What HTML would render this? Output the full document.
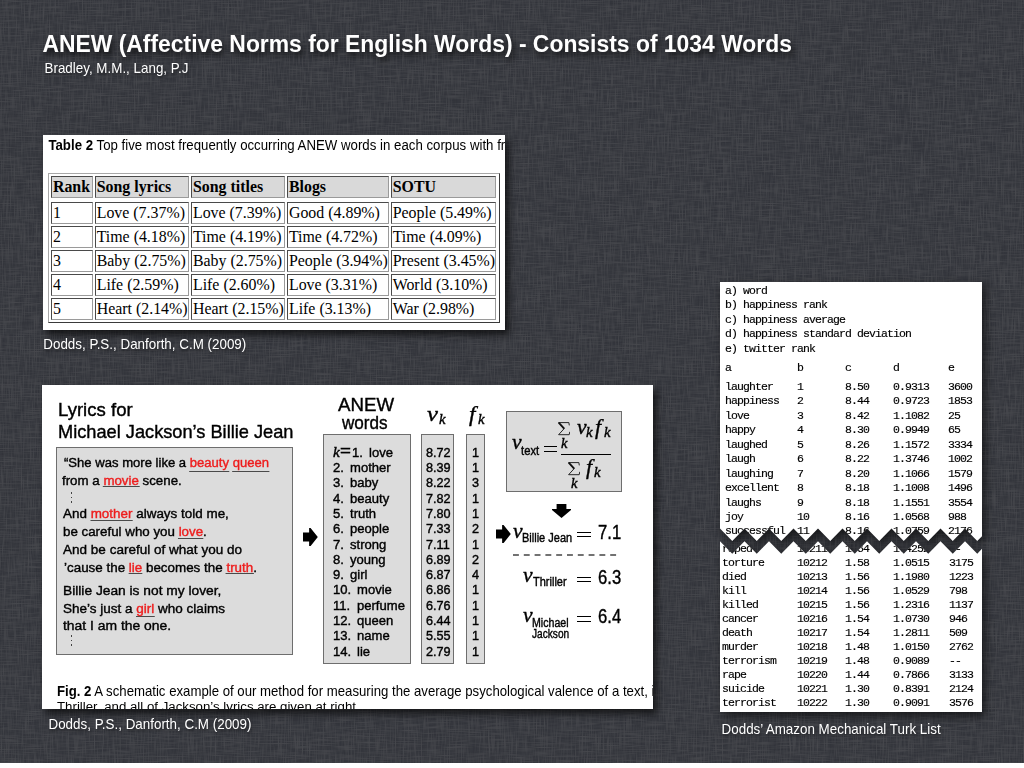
<!DOCTYPE html>
<html>
<head>
<meta charset="utf-8">
<title>ANEW (Affective Norms for English Words)</title>
<style>
html,body{margin:0;padding:0;background:#fff;}
body{width:1024px;height:768px;overflow:hidden;position:relative;font-family:"Liberation Sans",sans-serif;}
#slide{position:absolute;left:0;top:0;width:1024px;height:763px;background:#3b3d42;overflow:hidden;}
.t{position:absolute;white-space:pre;margin:0;padding:0;color:#000;}
.b{position:absolute;box-sizing:border-box;margin:0;padding:0;}
.w{color:#fff;text-shadow:1px 2px 3px rgba(0,0,0,.5);}
.sh{box-shadow:4px 5px 7px rgba(0,0,0,.62);}
.r{color:#ee1c1c;background:linear-gradient(#4a4a4a,#4a4a4a) 0 13.3px/100% 1px no-repeat;padding:0 0.5px;margin:0 -0.5px;}
.rd{color:#ee1c1c;border-bottom:1px solid #4a4a4a;padding:0 0.5px 0.7px;margin:0 -0.5px;}
.f .t{-webkit-text-stroke:0.4px currentColor;}
.f .ns{-webkit-text-stroke:0;}
</style>
</head>
<body>
<div id="slide">
<svg class="b" style="left:0;top:0" width="1024" height="763" viewBox="0 0 1024 763">
<defs>
<filter id="lin" x="0" y="0" width="100%" height="100%" color-interpolation-filters="sRGB">
<feTurbulence type="fractalNoise" baseFrequency="0.045 0.85" numOctaves="2" seed="3" result="h"/>
<feColorMatrix in="h" type="matrix" values="0 0 0 0 .82  0 0 0 0 .80  0 0 0 0 .78  2.2 0 0 0 -0.95" result="ha"/>
<feTurbulence type="fractalNoise" baseFrequency="0.85 0.045" numOctaves="2" seed="11" result="v"/>
<feColorMatrix in="v" type="matrix" values="0 0 0 0 .82  0 0 0 0 .80  0 0 0 0 .78  2.2 0 0 0 -0.95" result="va"/>
<feTurbulence type="fractalNoise" baseFrequency="0.045 0.85" numOctaves="2" seed="23" result="h2"/>
<feColorMatrix in="h2" type="matrix" values="0 0 0 0 0  0 0 0 0 0  0 0 0 0 .05  2.2 0 0 0 -0.95" result="hd"/>
<feTurbulence type="fractalNoise" baseFrequency="0.85 0.045" numOctaves="2" seed="31" result="v2"/>
<feColorMatrix in="v2" type="matrix" values="0 0 0 0 0  0 0 0 0 0  0 0 0 0 .05  2.2 0 0 0 -0.95" result="vd"/>
<feMerge><feMergeNode in="hd"/><feMergeNode in="vd"/><feMergeNode in="ha"/><feMergeNode in="va"/></feMerge>
</filter>
</defs>
<rect width="1024" height="763" fill="#37393f"/>
<rect width="1024" height="763" filter="url(#lin)" opacity="0.10"/>
</svg>
<div class="t " style="left:42.40px;top:29.17px;font-size:22.9px;line-height:30px;color:#fff;font-weight:bold;transform:scale(1.0,1.08);transform-origin:0 22.93px;text-shadow:2px 4px 6px rgba(0,0,0,.8);">ANEW (Affective Norms for English Words) - Consists of 1034 Words</div>
<div class="t w" style="left:44.50px;top:60.16px;font-size:13.4px;line-height:17px;color:#fff;transform:scale(1.0,1.07);transform-origin:0 13.14px;">Bradley, M.M., Lang, P.J</div>
<div class="b sh" style="left:43px;top:135px;width:462px;height:195px;background:#fff;overflow:hidden;">
<div class="t " style="left:5.40px;top:1.71px;font-size:13.25px;line-height:17px;transform:scale(1.0,1.04);transform-origin:0 13.09px;"><b>Table 2</b> Top five most frequently occurring ANEW words in each corpus with frequencies</div>
<div class="b" style="left:5px;top:38px;width:451.5px;height:150px;border:1px solid;border-color:#a8a8a8 #3a3a3a #3a3a3a #a8a8a8;"></div>
<div class="b" style="left:8.25px;top:41.25px;width:41.5px;height:21.5px;background:#d9d9d9;border:1px solid;border-color:#4a4a4a #9a9a9a #9a9a9a #4a4a4a;"></div>
<div class="t " style="left:9.95px;top:40.88px;font-size:15.9px;line-height:21px;font-family:'Liberation Serif',serif;font-weight:bold;">Rank</div>
<div class="b" style="left:52px;top:41.25px;width:93.75px;height:21.5px;background:#d9d9d9;border:1px solid;border-color:#4a4a4a #9a9a9a #9a9a9a #4a4a4a;"></div>
<div class="t " style="left:53.70px;top:40.88px;font-size:15.9px;line-height:21px;font-family:'Liberation Serif',serif;font-weight:bold;">Song lyrics</div>
<div class="b" style="left:148.25px;top:41.25px;width:93.5px;height:21.5px;background:#d9d9d9;border:1px solid;border-color:#4a4a4a #9a9a9a #9a9a9a #4a4a4a;"></div>
<div class="t " style="left:149.95px;top:40.88px;font-size:15.9px;line-height:21px;font-family:'Liberation Serif',serif;font-weight:bold;">Song titles</div>
<div class="b" style="left:244.25px;top:41.25px;width:101.5px;height:21.5px;background:#d9d9d9;border:1px solid;border-color:#4a4a4a #9a9a9a #9a9a9a #4a4a4a;"></div>
<div class="t " style="left:245.95px;top:40.88px;font-size:15.9px;line-height:21px;font-family:'Liberation Serif',serif;font-weight:bold;">Blogs</div>
<div class="b" style="left:348px;top:41.25px;width:105px;height:21.5px;background:#d9d9d9;border:1px solid;border-color:#4a4a4a #9a9a9a #9a9a9a #4a4a4a;"></div>
<div class="t " style="left:349.70px;top:40.88px;font-size:15.9px;line-height:21px;font-family:'Liberation Serif',serif;font-weight:bold;">SOTU</div>
<div class="b" style="left:8.25px;top:67px;width:41.5px;height:21.5px;background:#fff;border:1px solid;border-color:#4a4a4a #9a9a9a #9a9a9a #4a4a4a;"></div>
<div class="t " style="left:9.95px;top:66.63px;font-size:15.9px;line-height:21px;font-family:'Liberation Serif',serif;">1</div>
<div class="b" style="left:52px;top:67px;width:93.75px;height:21.5px;background:#fff;border:1px solid;border-color:#4a4a4a #9a9a9a #9a9a9a #4a4a4a;"></div>
<div class="t " style="left:53.70px;top:66.63px;font-size:15.9px;line-height:21px;font-family:'Liberation Serif',serif;">Love (7.37%)</div>
<div class="b" style="left:148.25px;top:67px;width:93.5px;height:21.5px;background:#fff;border:1px solid;border-color:#4a4a4a #9a9a9a #9a9a9a #4a4a4a;"></div>
<div class="t " style="left:149.95px;top:66.63px;font-size:15.9px;line-height:21px;font-family:'Liberation Serif',serif;">Love (7.39%)</div>
<div class="b" style="left:244.25px;top:67px;width:101.5px;height:21.5px;background:#fff;border:1px solid;border-color:#4a4a4a #9a9a9a #9a9a9a #4a4a4a;"></div>
<div class="t " style="left:245.95px;top:66.63px;font-size:15.9px;line-height:21px;font-family:'Liberation Serif',serif;">Good (4.89%)</div>
<div class="b" style="left:348px;top:67px;width:105px;height:21.5px;background:#fff;border:1px solid;border-color:#4a4a4a #9a9a9a #9a9a9a #4a4a4a;"></div>
<div class="t " style="left:349.70px;top:66.63px;font-size:15.9px;line-height:21px;font-family:'Liberation Serif',serif;">People (5.49%)</div>
<div class="b" style="left:8.25px;top:91px;width:41.5px;height:21.5px;background:#fff;border:1px solid;border-color:#4a4a4a #9a9a9a #9a9a9a #4a4a4a;"></div>
<div class="t " style="left:9.95px;top:90.63px;font-size:15.9px;line-height:21px;font-family:'Liberation Serif',serif;">2</div>
<div class="b" style="left:52px;top:91px;width:93.75px;height:21.5px;background:#fff;border:1px solid;border-color:#4a4a4a #9a9a9a #9a9a9a #4a4a4a;"></div>
<div class="t " style="left:53.70px;top:90.63px;font-size:15.9px;line-height:21px;font-family:'Liberation Serif',serif;">Time (4.18%)</div>
<div class="b" style="left:148.25px;top:91px;width:93.5px;height:21.5px;background:#fff;border:1px solid;border-color:#4a4a4a #9a9a9a #9a9a9a #4a4a4a;"></div>
<div class="t " style="left:149.95px;top:90.63px;font-size:15.9px;line-height:21px;font-family:'Liberation Serif',serif;">Time (4.19%)</div>
<div class="b" style="left:244.25px;top:91px;width:101.5px;height:21.5px;background:#fff;border:1px solid;border-color:#4a4a4a #9a9a9a #9a9a9a #4a4a4a;"></div>
<div class="t " style="left:245.95px;top:90.63px;font-size:15.9px;line-height:21px;font-family:'Liberation Serif',serif;">Time (4.72%)</div>
<div class="b" style="left:348px;top:91px;width:105px;height:21.5px;background:#fff;border:1px solid;border-color:#4a4a4a #9a9a9a #9a9a9a #4a4a4a;"></div>
<div class="t " style="left:349.70px;top:90.63px;font-size:15.9px;line-height:21px;font-family:'Liberation Serif',serif;">Time (4.09%)</div>
<div class="b" style="left:8.25px;top:115px;width:41.5px;height:21.5px;background:#fff;border:1px solid;border-color:#4a4a4a #9a9a9a #9a9a9a #4a4a4a;"></div>
<div class="t " style="left:9.95px;top:114.63px;font-size:15.9px;line-height:21px;font-family:'Liberation Serif',serif;">3</div>
<div class="b" style="left:52px;top:115px;width:93.75px;height:21.5px;background:#fff;border:1px solid;border-color:#4a4a4a #9a9a9a #9a9a9a #4a4a4a;"></div>
<div class="t " style="left:53.70px;top:114.63px;font-size:15.9px;line-height:21px;font-family:'Liberation Serif',serif;">Baby (2.75%)</div>
<div class="b" style="left:148.25px;top:115px;width:93.5px;height:21.5px;background:#fff;border:1px solid;border-color:#4a4a4a #9a9a9a #9a9a9a #4a4a4a;"></div>
<div class="t " style="left:149.95px;top:114.63px;font-size:15.9px;line-height:21px;font-family:'Liberation Serif',serif;">Baby (2.75%)</div>
<div class="b" style="left:244.25px;top:115px;width:101.5px;height:21.5px;background:#fff;border:1px solid;border-color:#4a4a4a #9a9a9a #9a9a9a #4a4a4a;"></div>
<div class="t " style="left:245.95px;top:114.63px;font-size:15.9px;line-height:21px;font-family:'Liberation Serif',serif;">People (3.94%)</div>
<div class="b" style="left:348px;top:115px;width:105px;height:21.5px;background:#fff;border:1px solid;border-color:#4a4a4a #9a9a9a #9a9a9a #4a4a4a;"></div>
<div class="t " style="left:349.70px;top:114.63px;font-size:15.9px;line-height:21px;font-family:'Liberation Serif',serif;">Present (3.45%)</div>
<div class="b" style="left:8.25px;top:139px;width:41.5px;height:21.5px;background:#fff;border:1px solid;border-color:#4a4a4a #9a9a9a #9a9a9a #4a4a4a;"></div>
<div class="t " style="left:9.95px;top:138.63px;font-size:15.9px;line-height:21px;font-family:'Liberation Serif',serif;">4</div>
<div class="b" style="left:52px;top:139px;width:93.75px;height:21.5px;background:#fff;border:1px solid;border-color:#4a4a4a #9a9a9a #9a9a9a #4a4a4a;"></div>
<div class="t " style="left:53.70px;top:138.63px;font-size:15.9px;line-height:21px;font-family:'Liberation Serif',serif;">Life (2.59%)</div>
<div class="b" style="left:148.25px;top:139px;width:93.5px;height:21.5px;background:#fff;border:1px solid;border-color:#4a4a4a #9a9a9a #9a9a9a #4a4a4a;"></div>
<div class="t " style="left:149.95px;top:138.63px;font-size:15.9px;line-height:21px;font-family:'Liberation Serif',serif;">Life (2.60%)</div>
<div class="b" style="left:244.25px;top:139px;width:101.5px;height:21.5px;background:#fff;border:1px solid;border-color:#4a4a4a #9a9a9a #9a9a9a #4a4a4a;"></div>
<div class="t " style="left:245.95px;top:138.63px;font-size:15.9px;line-height:21px;font-family:'Liberation Serif',serif;">Love (3.31%)</div>
<div class="b" style="left:348px;top:139px;width:105px;height:21.5px;background:#fff;border:1px solid;border-color:#4a4a4a #9a9a9a #9a9a9a #4a4a4a;"></div>
<div class="t " style="left:349.70px;top:138.63px;font-size:15.9px;line-height:21px;font-family:'Liberation Serif',serif;">World (3.10%)</div>
<div class="b" style="left:8.25px;top:163px;width:41.5px;height:21.5px;background:#fff;border:1px solid;border-color:#4a4a4a #9a9a9a #9a9a9a #4a4a4a;"></div>
<div class="t " style="left:9.95px;top:162.63px;font-size:15.9px;line-height:21px;font-family:'Liberation Serif',serif;">5</div>
<div class="b" style="left:52px;top:163px;width:93.75px;height:21.5px;background:#fff;border:1px solid;border-color:#4a4a4a #9a9a9a #9a9a9a #4a4a4a;"></div>
<div class="t " style="left:53.70px;top:162.63px;font-size:15.9px;line-height:21px;font-family:'Liberation Serif',serif;">Heart (2.14%)</div>
<div class="b" style="left:148.25px;top:163px;width:93.5px;height:21.5px;background:#fff;border:1px solid;border-color:#4a4a4a #9a9a9a #9a9a9a #4a4a4a;"></div>
<div class="t " style="left:149.95px;top:162.63px;font-size:15.9px;line-height:21px;font-family:'Liberation Serif',serif;">Heart (2.15%)</div>
<div class="b" style="left:244.25px;top:163px;width:101.5px;height:21.5px;background:#fff;border:1px solid;border-color:#4a4a4a #9a9a9a #9a9a9a #4a4a4a;"></div>
<div class="t " style="left:245.95px;top:162.63px;font-size:15.9px;line-height:21px;font-family:'Liberation Serif',serif;">Life (3.13%)</div>
<div class="b" style="left:348px;top:163px;width:105px;height:21.5px;background:#fff;border:1px solid;border-color:#4a4a4a #9a9a9a #9a9a9a #4a4a4a;"></div>
<div class="t " style="left:349.70px;top:162.63px;font-size:15.9px;line-height:21px;font-family:'Liberation Serif',serif;">War (2.98%)</div>
</div>
<div class="t w" style="left:43.30px;top:335.86px;font-size:13.4px;line-height:17px;color:#fff;transform:scale(1.0,1.07);transform-origin:0 13.14px;">Dodds, P.S., Danforth, C.M (2009)</div>
<div class="b sh f" style="left:42px;top:385px;width:611px;height:324px;background:#fff;overflow:hidden;">
<div class="t " style="left:16.20px;top:12.92px;font-size:18.4px;line-height:24px;transform:scale(1.01,1.0);transform-origin:0 18.38px;">Lyrics for</div>
<div class="t " style="left:16.20px;top:35.22px;font-size:18.4px;line-height:24px;transform:scale(0.99,1.0);transform-origin:0 18.38px;">Michael Jackson’s Billie Jean</div>
<div class="b" style="left:14.2px;top:62px;width:236.8px;height:207.5px;background:#dcdcdc;border:1px solid #6e6e6e;"></div>
<div class="t " style="left:22.20px;top:69.35px;font-size:13.7px;line-height:18px;transform:scale(0.9554,1.0);transform-origin:0 13.75px;">“She was more like a <span class="rd">beauty</span> <span class="rd">queen</span></div>
<div class="t " style="left:20.00px;top:86.85px;font-size:13.7px;line-height:18px;transform:scale(0.9715,1.0);transform-origin:0 13.75px;">from a <span class="r">movie</span> scene.</div>
<div class="t " style="left:21.20px;top:120.25px;font-size:13.7px;line-height:18px;transform:scale(0.9819,1.0);transform-origin:0 13.75px;">And <span class="r">mother</span> always told me,</div>
<div class="t " style="left:21.00px;top:138.25px;font-size:13.7px;line-height:18px;transform:scale(0.9743,1.0);transform-origin:0 13.75px;">be careful who you <span class="r">love</span>.</div>
<div class="t " style="left:21.20px;top:156.35px;font-size:13.7px;line-height:18px;transform:scale(0.9885,1.0);transform-origin:0 13.75px;">And be careful of what you do</div>
<div class="t " style="left:21.80px;top:174.15px;font-size:13.7px;line-height:18px;transform:scale(0.979,1.0);transform-origin:0 13.75px;">’cause the <span class="r">lie</span> becomes the <span class="r">truth</span>.</div>
<div class="t " style="left:21.00px;top:197.05px;font-size:13.7px;line-height:18px;transform:scale(1.0055,1.0);transform-origin:0 13.75px;">Billie Jean is not my lover,</div>
<div class="t " style="left:20.80px;top:214.65px;font-size:13.7px;line-height:18px;transform:scale(0.9866,1.0);transform-origin:0 13.75px;">She’s just a <span class="rd">girl</span> who claims</div>
<div class="t " style="left:21.30px;top:232.15px;font-size:13.7px;line-height:18px;transform:scale(1.0149,1.0);transform-origin:0 13.75px;">that I am the one.</div>
<div class="b" style="left:29.2px;top:107.4px;width:1.1999999999999993px;height:1.1999999999999886px;background:#444;"></div>
<div class="b" style="left:29.2px;top:111.9px;width:1.1999999999999993px;height:1.1999999999999886px;background:#444;"></div>
<div class="b" style="left:29.2px;top:116.4px;width:1.1999999999999993px;height:1.1999999999999886px;background:#444;"></div>
<div class="b" style="left:29.2px;top:250.4px;width:1.1999999999999993px;height:1.1999999999999886px;background:#444;"></div>
<div class="b" style="left:29.2px;top:254.9px;width:1.1999999999999993px;height:1.200000000000017px;background:#444;"></div>
<div class="b" style="left:29.2px;top:259.4px;width:1.1999999999999993px;height:1.2000000000000455px;background:#444;"></div>
<svg class="b" style="left:261.1px;top:143.20000000000005px" width="14.8" height="18.1" viewBox="0 0 14.5 17.7" preserveAspectRatio="none"><path d="M0 4.5H6V0H7.4L14.5 8.85L7.4 17.7H6V13.2H0Z" fill="#000"/></svg>
<div class="t " style="left:296.30px;top:7.92px;font-size:18.7px;line-height:24px;transform:scale(0.999,1.0);transform-origin:0 18.48px;">ANEW</div>
<div class="t " style="left:300.20px;top:25.52px;font-size:18.7px;line-height:24px;transform:scale(0.915,1.0);transform-origin:0 18.48px;">words</div>
<div class="b" style="left:281.3px;top:48.8px;width:87.69999999999999px;height:229.89999999999998px;background:#dcdcdc;border:1px solid #6e6e6e;"></div>
<div class="b" style="left:379.3px;top:48.8px;width:32.89999999999998px;height:229.89999999999998px;background:#dcdcdc;border:1px solid #6e6e6e;"></div>
<div class="b" style="left:424.3px;top:48.8px;width:18.69999999999999px;height:229.89999999999998px;background:#dcdcdc;border:1px solid #6e6e6e;"></div>
<div class="t " style="left:291.00px;top:57.51px;font-size:14.5px;line-height:19px;font-family:'Liberation Serif',serif;font-style:italic;transform:scale(1.05,1.0);transform-origin:0 14.39px;">k</div>
<div class="t " style="left:298.30px;top:56.40px;font-size:15px;line-height:20px;transform:scale(1.25,1.0);transform-origin:0 15.20px;">=</div>
<div class="t " style="left:310.30px;top:58.83px;font-size:13.2px;line-height:17px;transform:scale(0.99,1.0);transform-origin:0 13.07px;">1.</div>
<div class="t " style="left:326.80px;top:58.83px;font-size:13.2px;line-height:17px;transform:scale(0.99,1.0);transform-origin:0 13.07px;">love</div>
<div class="t " style="left:384.00px;top:58.83px;font-size:13.2px;line-height:17px;transform:scale(0.96,1.0);transform-origin:0 13.07px;">8.72</div>
<div class="t " style="left:430.30px;top:58.83px;font-size:13.2px;line-height:17px;transform:scale(0.96,1.0);transform-origin:0 13.07px;">1</div>
<div class="t " style="left:291.00px;top:74.11px;font-size:13.2px;line-height:17px;transform:scale(0.99,1.0);transform-origin:0 13.07px;">2.</div>
<div class="t " style="left:308.40px;top:74.11px;font-size:13.2px;line-height:17px;transform:scale(0.99,1.0);transform-origin:0 13.07px;">mother</div>
<div class="t " style="left:384.00px;top:74.11px;font-size:13.2px;line-height:17px;transform:scale(0.96,1.0);transform-origin:0 13.07px;">8.39</div>
<div class="t " style="left:430.30px;top:74.11px;font-size:13.2px;line-height:17px;transform:scale(0.96,1.0);transform-origin:0 13.07px;">1</div>
<div class="t " style="left:291.00px;top:89.40px;font-size:13.2px;line-height:17px;transform:scale(0.99,1.0);transform-origin:0 13.07px;">3.</div>
<div class="t " style="left:308.40px;top:89.40px;font-size:13.2px;line-height:17px;transform:scale(0.99,1.0);transform-origin:0 13.07px;">baby</div>
<div class="t " style="left:384.00px;top:89.40px;font-size:13.2px;line-height:17px;transform:scale(0.96,1.0);transform-origin:0 13.07px;">8.22</div>
<div class="t " style="left:430.30px;top:89.40px;font-size:13.2px;line-height:17px;transform:scale(0.96,1.0);transform-origin:0 13.07px;">3</div>
<div class="t " style="left:291.00px;top:104.68px;font-size:13.2px;line-height:17px;transform:scale(0.99,1.0);transform-origin:0 13.07px;">4.</div>
<div class="t " style="left:308.40px;top:104.68px;font-size:13.2px;line-height:17px;transform:scale(0.99,1.0);transform-origin:0 13.07px;">beauty</div>
<div class="t " style="left:384.00px;top:104.68px;font-size:13.2px;line-height:17px;transform:scale(0.96,1.0);transform-origin:0 13.07px;">7.82</div>
<div class="t " style="left:430.30px;top:104.68px;font-size:13.2px;line-height:17px;transform:scale(0.96,1.0);transform-origin:0 13.07px;">1</div>
<div class="t " style="left:291.00px;top:119.97px;font-size:13.2px;line-height:17px;transform:scale(0.99,1.0);transform-origin:0 13.07px;">5.</div>
<div class="t " style="left:308.40px;top:119.97px;font-size:13.2px;line-height:17px;transform:scale(0.99,1.0);transform-origin:0 13.07px;">truth</div>
<div class="t " style="left:384.00px;top:119.97px;font-size:13.2px;line-height:17px;transform:scale(0.96,1.0);transform-origin:0 13.07px;">7.80</div>
<div class="t " style="left:430.30px;top:119.97px;font-size:13.2px;line-height:17px;transform:scale(0.96,1.0);transform-origin:0 13.07px;">1</div>
<div class="t " style="left:291.00px;top:135.25px;font-size:13.2px;line-height:17px;transform:scale(0.99,1.0);transform-origin:0 13.07px;">6.</div>
<div class="t " style="left:308.40px;top:135.25px;font-size:13.2px;line-height:17px;transform:scale(0.99,1.0);transform-origin:0 13.07px;">people</div>
<div class="t " style="left:384.00px;top:135.25px;font-size:13.2px;line-height:17px;transform:scale(0.96,1.0);transform-origin:0 13.07px;">7.33</div>
<div class="t " style="left:430.30px;top:135.25px;font-size:13.2px;line-height:17px;transform:scale(0.96,1.0);transform-origin:0 13.07px;">2</div>
<div class="t " style="left:291.00px;top:150.54px;font-size:13.2px;line-height:17px;transform:scale(0.99,1.0);transform-origin:0 13.07px;">7.</div>
<div class="t " style="left:308.40px;top:150.54px;font-size:13.2px;line-height:17px;transform:scale(0.99,1.0);transform-origin:0 13.07px;">strong</div>
<div class="t " style="left:384.00px;top:150.54px;font-size:13.2px;line-height:17px;transform:scale(0.96,1.0);transform-origin:0 13.07px;">7.11</div>
<div class="t " style="left:430.30px;top:150.54px;font-size:13.2px;line-height:17px;transform:scale(0.96,1.0);transform-origin:0 13.07px;">1</div>
<div class="t " style="left:291.00px;top:165.82px;font-size:13.2px;line-height:17px;transform:scale(0.99,1.0);transform-origin:0 13.07px;">8.</div>
<div class="t " style="left:308.40px;top:165.82px;font-size:13.2px;line-height:17px;transform:scale(0.99,1.0);transform-origin:0 13.07px;">young</div>
<div class="t " style="left:384.00px;top:165.82px;font-size:13.2px;line-height:17px;transform:scale(0.96,1.0);transform-origin:0 13.07px;">6.89</div>
<div class="t " style="left:430.30px;top:165.82px;font-size:13.2px;line-height:17px;transform:scale(0.96,1.0);transform-origin:0 13.07px;">2</div>
<div class="t " style="left:291.00px;top:181.11px;font-size:13.2px;line-height:17px;transform:scale(0.99,1.0);transform-origin:0 13.07px;">9.</div>
<div class="t " style="left:308.40px;top:181.11px;font-size:13.2px;line-height:17px;transform:scale(0.99,1.0);transform-origin:0 13.07px;">girl</div>
<div class="t " style="left:384.00px;top:181.11px;font-size:13.2px;line-height:17px;transform:scale(0.96,1.0);transform-origin:0 13.07px;">6.87</div>
<div class="t " style="left:430.30px;top:181.11px;font-size:13.2px;line-height:17px;transform:scale(0.96,1.0);transform-origin:0 13.07px;">4</div>
<div class="t " style="left:291.00px;top:196.39px;font-size:13.2px;line-height:17px;transform:scale(0.99,1.0);transform-origin:0 13.07px;">10.</div>
<div class="t " style="left:315.20px;top:196.39px;font-size:13.2px;line-height:17px;transform:scale(0.99,1.0);transform-origin:0 13.07px;">movie</div>
<div class="t " style="left:384.00px;top:196.39px;font-size:13.2px;line-height:17px;transform:scale(0.96,1.0);transform-origin:0 13.07px;">6.86</div>
<div class="t " style="left:430.30px;top:196.39px;font-size:13.2px;line-height:17px;transform:scale(0.96,1.0);transform-origin:0 13.07px;">1</div>
<div class="t " style="left:291.00px;top:211.68px;font-size:13.2px;line-height:17px;transform:scale(0.99,1.0);transform-origin:0 13.07px;">11.</div>
<div class="t " style="left:315.20px;top:211.68px;font-size:13.2px;line-height:17px;transform:scale(0.99,1.0);transform-origin:0 13.07px;">perfume</div>
<div class="t " style="left:384.00px;top:211.68px;font-size:13.2px;line-height:17px;transform:scale(0.96,1.0);transform-origin:0 13.07px;">6.76</div>
<div class="t " style="left:430.30px;top:211.68px;font-size:13.2px;line-height:17px;transform:scale(0.96,1.0);transform-origin:0 13.07px;">1</div>
<div class="t " style="left:291.00px;top:226.96px;font-size:13.2px;line-height:17px;transform:scale(0.99,1.0);transform-origin:0 13.07px;">12.</div>
<div class="t " style="left:315.20px;top:226.96px;font-size:13.2px;line-height:17px;transform:scale(0.99,1.0);transform-origin:0 13.07px;">queen</div>
<div class="t " style="left:384.00px;top:226.96px;font-size:13.2px;line-height:17px;transform:scale(0.96,1.0);transform-origin:0 13.07px;">6.44</div>
<div class="t " style="left:430.30px;top:226.96px;font-size:13.2px;line-height:17px;transform:scale(0.96,1.0);transform-origin:0 13.07px;">1</div>
<div class="t " style="left:291.00px;top:242.25px;font-size:13.2px;line-height:17px;transform:scale(0.99,1.0);transform-origin:0 13.07px;">13.</div>
<div class="t " style="left:315.20px;top:242.25px;font-size:13.2px;line-height:17px;transform:scale(0.99,1.0);transform-origin:0 13.07px;">name</div>
<div class="t " style="left:384.00px;top:242.25px;font-size:13.2px;line-height:17px;transform:scale(0.96,1.0);transform-origin:0 13.07px;">5.55</div>
<div class="t " style="left:430.30px;top:242.25px;font-size:13.2px;line-height:17px;transform:scale(0.96,1.0);transform-origin:0 13.07px;">1</div>
<div class="t " style="left:291.00px;top:257.53px;font-size:13.2px;line-height:17px;transform:scale(0.99,1.0);transform-origin:0 13.07px;">14.</div>
<div class="t " style="left:315.20px;top:257.53px;font-size:13.2px;line-height:17px;transform:scale(0.99,1.0);transform-origin:0 13.07px;">lie</div>
<div class="t " style="left:384.00px;top:257.53px;font-size:13.2px;line-height:17px;transform:scale(0.96,1.0);transform-origin:0 13.07px;">2.79</div>
<div class="t " style="left:430.30px;top:257.53px;font-size:13.2px;line-height:17px;transform:scale(0.96,1.0);transform-origin:0 13.07px;">1</div>
<div class="t " style="left:385.30px;top:14.18px;font-size:22px;line-height:29px;font-family:'Liberation Serif',serif;font-style:italic;transform:scale(1.12,1.0);transform-origin:0 21.93px;">v</div>
<div class="t " style="left:396.60px;top:23.77px;font-size:15.5px;line-height:20px;font-family:'Liberation Serif',serif;font-style:italic;transform:scale(0.95,1.0);transform-origin:0 15.23px;">k</div>
<div class="t " style="left:426.60px;top:14.18px;font-size:22px;line-height:29px;font-family:'Liberation Serif',serif;font-style:italic;transform:scale(1.05,1.0);transform-origin:0 21.93px;">f</div>
<div class="t " style="left:436.00px;top:23.77px;font-size:15.5px;line-height:20px;font-family:'Liberation Serif',serif;font-style:italic;transform:scale(0.95,1.0);transform-origin:0 15.23px;">k</div>
<svg class="b" style="left:454.2px;top:139.60000000000002px" width="14.8" height="18.1" viewBox="0 0 14.5 17.7" preserveAspectRatio="none"><path d="M0 4.5H6V0H7.4L14.5 8.85L7.4 17.7H6V13.2H0Z" fill="#000"/></svg>
<div class="b" style="left:464.4px;top:26.4px;width:115.39999999999998px;height:80.6px;background:#dcdcdc;border:1px solid #6e6e6e;"></div>
<div class="t " style="left:469.80px;top:42.38px;font-size:22px;line-height:29px;font-family:'Liberation Serif',serif;font-style:italic;transform:scale(0.98,1.0);transform-origin:0 21.93px;">v</div>
<div class="t " style="left:478.60px;top:58.17px;font-size:12.5px;line-height:16px;transform:scale(0.9,1.0);transform-origin:0 12.33px;">text</div>
<div class="b" style="left:501.8px;top:61.4px;width:13.199999999999989px;height:1.0px;background:#000;"></div>
<div class="b" style="left:501.8px;top:66px;width:13.199999999999989px;height:1px;background:#000;"></div>
<div class="b" style="left:518.7px;top:68.7px;width:50.09999999999991px;height:1.0px;background:#000;"></div>
<svg class="b" style="left:516.30px;top:37.00px" width="12.2" height="13.5" viewBox="0 0 12.2 13.5"><path d="M11.3 3.4L10.9 0.6H0.6L6.2 6.6L0.6 12.7H11.2L11.8 9.8" fill="none" stroke="#111" stroke-width="0.9" stroke-linejoin="miter"/><path d="M0.6 0.6L6.2 6.6" stroke="#111" stroke-width="1.9" fill="none"/></svg>
<div class="t " style="left:519.20px;top:49.41px;font-size:14.5px;line-height:19px;font-family:'Liberation Serif',serif;font-style:italic;transform:scale(0.9999,1.0);transform-origin:0 14.39px;">k</div>
<div class="t " style="left:534.60px;top:27.27px;font-size:22px;line-height:29px;font-family:'Liberation Serif',serif;font-style:italic;transform:scale(0.98,1.0);transform-origin:0 21.93px;">v</div>
<div class="t " style="left:543.60px;top:37.27px;font-size:15.5px;line-height:20px;font-family:'Liberation Serif',serif;font-style:italic;transform:scale(0.95,1.0);transform-origin:0 15.23px;">k</div>
<div class="t " style="left:552.60px;top:27.27px;font-size:22px;line-height:29px;font-family:'Liberation Serif',serif;font-style:italic;transform:scale(0.9999,1.0);transform-origin:0 21.93px;">f</div>
<div class="t " style="left:561.80px;top:37.27px;font-size:15.5px;line-height:20px;font-family:'Liberation Serif',serif;font-style:italic;transform:scale(0.95,1.0);transform-origin:0 15.23px;">k</div>
<svg class="b" style="left:525.60px;top:77.20px" width="12.2" height="13.5" viewBox="0 0 12.2 13.5"><path d="M11.3 3.4L10.9 0.6H0.6L6.2 6.6L0.6 12.7H11.2L11.8 9.8" fill="none" stroke="#111" stroke-width="0.9" stroke-linejoin="miter"/><path d="M0.6 0.6L6.2 6.6" stroke="#111" stroke-width="1.9" fill="none"/></svg>
<div class="t " style="left:528.90px;top:88.91px;font-size:14.5px;line-height:19px;font-family:'Liberation Serif',serif;font-style:italic;transform:scale(0.9999,1.0);transform-origin:0 14.39px;">k</div>
<div class="t " style="left:544.20px;top:67.38px;font-size:22px;line-height:29px;font-family:'Liberation Serif',serif;font-style:italic;transform:scale(0.9999,1.0);transform-origin:0 21.93px;">f</div>
<div class="t " style="left:552.20px;top:77.37px;font-size:15.5px;line-height:20px;font-family:'Liberation Serif',serif;font-style:italic;transform:scale(0.95,1.0);transform-origin:0 15.23px;">k</div>
<svg class="b" style="left:510px;top:119px" width="19" height="14" viewBox="0 0 19 14"><path d="M4.6 0H14.4V5H19V6L9.5 14L0 6V5H4.6Z" fill="#000"/></svg>
<div class="t " style="left:471.00px;top:130.57px;font-size:22px;line-height:29px;font-family:'Liberation Serif',serif;font-style:italic;transform:scale(0.98,1.0);transform-origin:0 21.93px;">v</div>
<div class="t " style="left:479.70px;top:144.77px;font-size:12.5px;line-height:16px;transform:scale(0.88,1.0);transform-origin:0 12.33px;">Billie Jean</div>
<div class="b" style="left:535px;top:146.8px;width:13.600000000000023px;height:1.0px;background:#000;"></div>
<div class="b" style="left:535px;top:151.4px;width:13.600000000000023px;height:1.0px;background:#000;"></div>
<div class="t " style="left:556.30px;top:135.31px;font-size:19.6px;line-height:25px;transform:scale(0.85,1.0);transform-origin:0 19.29px;">7.1</div>
<svg class="b" style="left:471px;top:168px" width="104" height="4" viewBox="0 0 104 4"><line x1="0" y1="2.1" x2="103.2" y2="2.1" stroke="#444" stroke-width="1.5" stroke-dasharray="5.9 4.9"/></svg>
<div class="t " style="left:480.70px;top:174.78px;font-size:22px;line-height:29px;font-family:'Liberation Serif',serif;font-style:italic;transform:scale(0.98,1.0);transform-origin:0 21.93px;">v</div>
<div class="t " style="left:490.70px;top:189.17px;font-size:12.5px;line-height:16px;transform:scale(0.88,1.0);transform-origin:0 12.33px;">Thriller</div>
<div class="b" style="left:535px;top:191.5px;width:13.600000000000023px;height:1.0px;background:#000;"></div>
<div class="b" style="left:535px;top:196.1px;width:13.600000000000023px;height:1.0px;background:#000;"></div>
<div class="t " style="left:556.30px;top:179.71px;font-size:19.6px;line-height:25px;transform:scale(0.85,1.0);transform-origin:0 19.29px;">6.3</div>
<div class="t " style="left:480.70px;top:214.97px;font-size:22px;line-height:29px;font-family:'Liberation Serif',serif;font-style:italic;transform:scale(0.98,1.0);transform-origin:0 21.93px;">v</div>
<div class="t " style="left:489.70px;top:230.17px;font-size:12.5px;line-height:16px;transform:scale(0.85,1.0);transform-origin:0 12.33px;">Michael</div>
<div class="t " style="left:489.70px;top:241.17px;font-size:12.5px;line-height:16px;transform:scale(0.81,1.0);transform-origin:0 12.33px;">Jackson</div>
<div class="b" style="left:535px;top:231.2px;width:13.600000000000023px;height:1.0px;background:#000;"></div>
<div class="b" style="left:535px;top:235.8px;width:13.600000000000023px;height:1.0px;background:#000;"></div>
<div class="t " style="left:556.30px;top:219.01px;font-size:19.6px;line-height:25px;transform:scale(0.85,1.0);transform-origin:0 19.29px;">6.4</div>
<div class="t ns" style="left:15.00px;top:297.93px;font-size:13.2px;line-height:17px;transform:scale(1.0,1.04);transform-origin:0 13.07px;"><b>Fig. 2</b> A schematic example of our method for measuring the average psychological valence of a text, in this case</div>
<div class="t ns" style="left:15.00px;top:313.00px;font-size:13px;line-height:17px;transform:scale(1.02,1.04);transform-origin:0 13.00px;">Thriller, and all of Jackson’s lyrics are given at right</div>
</div>
<div class="t w" style="left:48.50px;top:716.06px;font-size:13.4px;line-height:17px;color:#fff;transform:scale(1.0,1.07);transform-origin:0 13.14px;">Dodds, P.S., Danforth, C.M (2009)</div>
<div class="b" style="left:720px;top:282px;width:262.20000000000005px;height:430px;filter:drop-shadow(3px 4px 5px rgba(0,0,0,.6));">
<div class="b" style="left:0;top:0;width:262.20000000000005px;height:430px;background:#fff;clip-path:polygon(0.00px 0.00px,262.20px 0.00px,262.20px 253.95px,257.25px 259.00px,245.00px 246.50px,232.75px 259.00px,220.50px 246.50px,208.25px 259.00px,196.00px 246.50px,183.75px 259.00px,171.50px 246.50px,159.25px 259.00px,147.00px 246.50px,134.75px 259.00px,122.50px 246.50px,110.25px 259.00px,98.00px 246.50px,85.75px 259.00px,73.50px 246.50px,61.25px 259.00px,49.00px 246.50px,36.75px 259.00px,24.50px 246.50px,12.25px 259.00px,0.00px 246.50px);">
<div class="t " style="left:4.90px;top:0.84px;font-size:11.5px;line-height:15px;font-family:'Liberation Mono',monospace;letter-spacing:-0.9px;-webkit-text-stroke:0.15px #000;">a) word</div>
<div class="t " style="left:4.90px;top:15.34px;font-size:11.5px;line-height:15px;font-family:'Liberation Mono',monospace;letter-spacing:-0.9px;-webkit-text-stroke:0.15px #000;">b) happiness rank</div>
<div class="t " style="left:4.90px;top:29.84px;font-size:11.5px;line-height:15px;font-family:'Liberation Mono',monospace;letter-spacing:-0.9px;-webkit-text-stroke:0.15px #000;">c) happiness average</div>
<div class="t " style="left:4.90px;top:44.34px;font-size:11.5px;line-height:15px;font-family:'Liberation Mono',monospace;letter-spacing:-0.9px;-webkit-text-stroke:0.15px #000;">d) happiness standard deviation</div>
<div class="t " style="left:4.90px;top:58.84px;font-size:11.5px;line-height:15px;font-family:'Liberation Mono',monospace;letter-spacing:-0.9px;-webkit-text-stroke:0.15px #000;">e) twitter rank</div>
<div class="t " style="left:4.90px;top:77.94px;font-size:11.5px;line-height:15px;font-family:'Liberation Mono',monospace;letter-spacing:-0.9px;-webkit-text-stroke:0.15px #000;">a</div>
<div class="t " style="left:76.90px;top:77.94px;font-size:11.5px;line-height:15px;font-family:'Liberation Mono',monospace;letter-spacing:-0.9px;-webkit-text-stroke:0.15px #000;">b</div>
<div class="t " style="left:124.90px;top:77.94px;font-size:11.5px;line-height:15px;font-family:'Liberation Mono',monospace;letter-spacing:-0.9px;-webkit-text-stroke:0.15px #000;">c</div>
<div class="t " style="left:172.90px;top:77.94px;font-size:11.5px;line-height:15px;font-family:'Liberation Mono',monospace;letter-spacing:-0.9px;-webkit-text-stroke:0.15px #000;">d</div>
<div class="t " style="left:227.90px;top:77.94px;font-size:11.5px;line-height:15px;font-family:'Liberation Mono',monospace;letter-spacing:-0.9px;-webkit-text-stroke:0.15px #000;">e</div>
<div class="t " style="left:4.90px;top:96.94px;font-size:11.5px;line-height:15px;font-family:'Liberation Mono',monospace;letter-spacing:-0.9px;-webkit-text-stroke:0.15px #000;">laughter</div>
<div class="t " style="left:76.90px;top:96.94px;font-size:11.5px;line-height:15px;font-family:'Liberation Mono',monospace;letter-spacing:-0.9px;-webkit-text-stroke:0.15px #000;">1</div>
<div class="t " style="left:124.90px;top:96.94px;font-size:11.5px;line-height:15px;font-family:'Liberation Mono',monospace;letter-spacing:-0.9px;-webkit-text-stroke:0.15px #000;">8.50</div>
<div class="t " style="left:172.90px;top:96.94px;font-size:11.5px;line-height:15px;font-family:'Liberation Mono',monospace;letter-spacing:-0.9px;-webkit-text-stroke:0.15px #000;">0.9313</div>
<div class="t " style="left:227.90px;top:96.94px;font-size:11.5px;line-height:15px;font-family:'Liberation Mono',monospace;letter-spacing:-0.9px;-webkit-text-stroke:0.15px #000;">3600</div>
<div class="t " style="left:4.90px;top:111.39px;font-size:11.5px;line-height:15px;font-family:'Liberation Mono',monospace;letter-spacing:-0.9px;-webkit-text-stroke:0.15px #000;">happiness</div>
<div class="t " style="left:76.90px;top:111.39px;font-size:11.5px;line-height:15px;font-family:'Liberation Mono',monospace;letter-spacing:-0.9px;-webkit-text-stroke:0.15px #000;">2</div>
<div class="t " style="left:124.90px;top:111.39px;font-size:11.5px;line-height:15px;font-family:'Liberation Mono',monospace;letter-spacing:-0.9px;-webkit-text-stroke:0.15px #000;">8.44</div>
<div class="t " style="left:172.90px;top:111.39px;font-size:11.5px;line-height:15px;font-family:'Liberation Mono',monospace;letter-spacing:-0.9px;-webkit-text-stroke:0.15px #000;">0.9723</div>
<div class="t " style="left:227.90px;top:111.39px;font-size:11.5px;line-height:15px;font-family:'Liberation Mono',monospace;letter-spacing:-0.9px;-webkit-text-stroke:0.15px #000;">1853</div>
<div class="t " style="left:4.90px;top:125.84px;font-size:11.5px;line-height:15px;font-family:'Liberation Mono',monospace;letter-spacing:-0.9px;-webkit-text-stroke:0.15px #000;">love</div>
<div class="t " style="left:76.90px;top:125.84px;font-size:11.5px;line-height:15px;font-family:'Liberation Mono',monospace;letter-spacing:-0.9px;-webkit-text-stroke:0.15px #000;">3</div>
<div class="t " style="left:124.90px;top:125.84px;font-size:11.5px;line-height:15px;font-family:'Liberation Mono',monospace;letter-spacing:-0.9px;-webkit-text-stroke:0.15px #000;">8.42</div>
<div class="t " style="left:172.90px;top:125.84px;font-size:11.5px;line-height:15px;font-family:'Liberation Mono',monospace;letter-spacing:-0.9px;-webkit-text-stroke:0.15px #000;">1.1082</div>
<div class="t " style="left:227.90px;top:125.84px;font-size:11.5px;line-height:15px;font-family:'Liberation Mono',monospace;letter-spacing:-0.9px;-webkit-text-stroke:0.15px #000;">25</div>
<div class="t " style="left:4.90px;top:140.29px;font-size:11.5px;line-height:15px;font-family:'Liberation Mono',monospace;letter-spacing:-0.9px;-webkit-text-stroke:0.15px #000;">happy</div>
<div class="t " style="left:76.90px;top:140.29px;font-size:11.5px;line-height:15px;font-family:'Liberation Mono',monospace;letter-spacing:-0.9px;-webkit-text-stroke:0.15px #000;">4</div>
<div class="t " style="left:124.90px;top:140.29px;font-size:11.5px;line-height:15px;font-family:'Liberation Mono',monospace;letter-spacing:-0.9px;-webkit-text-stroke:0.15px #000;">8.30</div>
<div class="t " style="left:172.90px;top:140.29px;font-size:11.5px;line-height:15px;font-family:'Liberation Mono',monospace;letter-spacing:-0.9px;-webkit-text-stroke:0.15px #000;">0.9949</div>
<div class="t " style="left:227.90px;top:140.29px;font-size:11.5px;line-height:15px;font-family:'Liberation Mono',monospace;letter-spacing:-0.9px;-webkit-text-stroke:0.15px #000;">65</div>
<div class="t " style="left:4.90px;top:154.74px;font-size:11.5px;line-height:15px;font-family:'Liberation Mono',monospace;letter-spacing:-0.9px;-webkit-text-stroke:0.15px #000;">laughed</div>
<div class="t " style="left:76.90px;top:154.74px;font-size:11.5px;line-height:15px;font-family:'Liberation Mono',monospace;letter-spacing:-0.9px;-webkit-text-stroke:0.15px #000;">5</div>
<div class="t " style="left:124.90px;top:154.74px;font-size:11.5px;line-height:15px;font-family:'Liberation Mono',monospace;letter-spacing:-0.9px;-webkit-text-stroke:0.15px #000;">8.26</div>
<div class="t " style="left:172.90px;top:154.74px;font-size:11.5px;line-height:15px;font-family:'Liberation Mono',monospace;letter-spacing:-0.9px;-webkit-text-stroke:0.15px #000;">1.1572</div>
<div class="t " style="left:227.90px;top:154.74px;font-size:11.5px;line-height:15px;font-family:'Liberation Mono',monospace;letter-spacing:-0.9px;-webkit-text-stroke:0.15px #000;">3334</div>
<div class="t " style="left:4.90px;top:169.19px;font-size:11.5px;line-height:15px;font-family:'Liberation Mono',monospace;letter-spacing:-0.9px;-webkit-text-stroke:0.15px #000;">laugh</div>
<div class="t " style="left:76.90px;top:169.19px;font-size:11.5px;line-height:15px;font-family:'Liberation Mono',monospace;letter-spacing:-0.9px;-webkit-text-stroke:0.15px #000;">6</div>
<div class="t " style="left:124.90px;top:169.19px;font-size:11.5px;line-height:15px;font-family:'Liberation Mono',monospace;letter-spacing:-0.9px;-webkit-text-stroke:0.15px #000;">8.22</div>
<div class="t " style="left:172.90px;top:169.19px;font-size:11.5px;line-height:15px;font-family:'Liberation Mono',monospace;letter-spacing:-0.9px;-webkit-text-stroke:0.15px #000;">1.3746</div>
<div class="t " style="left:227.90px;top:169.19px;font-size:11.5px;line-height:15px;font-family:'Liberation Mono',monospace;letter-spacing:-0.9px;-webkit-text-stroke:0.15px #000;">1002</div>
<div class="t " style="left:4.90px;top:183.64px;font-size:11.5px;line-height:15px;font-family:'Liberation Mono',monospace;letter-spacing:-0.9px;-webkit-text-stroke:0.15px #000;">laughing</div>
<div class="t " style="left:76.90px;top:183.64px;font-size:11.5px;line-height:15px;font-family:'Liberation Mono',monospace;letter-spacing:-0.9px;-webkit-text-stroke:0.15px #000;">7</div>
<div class="t " style="left:124.90px;top:183.64px;font-size:11.5px;line-height:15px;font-family:'Liberation Mono',monospace;letter-spacing:-0.9px;-webkit-text-stroke:0.15px #000;">8.20</div>
<div class="t " style="left:172.90px;top:183.64px;font-size:11.5px;line-height:15px;font-family:'Liberation Mono',monospace;letter-spacing:-0.9px;-webkit-text-stroke:0.15px #000;">1.1066</div>
<div class="t " style="left:227.90px;top:183.64px;font-size:11.5px;line-height:15px;font-family:'Liberation Mono',monospace;letter-spacing:-0.9px;-webkit-text-stroke:0.15px #000;">1579</div>
<div class="t " style="left:4.90px;top:198.09px;font-size:11.5px;line-height:15px;font-family:'Liberation Mono',monospace;letter-spacing:-0.9px;-webkit-text-stroke:0.15px #000;">excellent</div>
<div class="t " style="left:76.90px;top:198.09px;font-size:11.5px;line-height:15px;font-family:'Liberation Mono',monospace;letter-spacing:-0.9px;-webkit-text-stroke:0.15px #000;">8</div>
<div class="t " style="left:124.90px;top:198.09px;font-size:11.5px;line-height:15px;font-family:'Liberation Mono',monospace;letter-spacing:-0.9px;-webkit-text-stroke:0.15px #000;">8.18</div>
<div class="t " style="left:172.90px;top:198.09px;font-size:11.5px;line-height:15px;font-family:'Liberation Mono',monospace;letter-spacing:-0.9px;-webkit-text-stroke:0.15px #000;">1.1008</div>
<div class="t " style="left:227.90px;top:198.09px;font-size:11.5px;line-height:15px;font-family:'Liberation Mono',monospace;letter-spacing:-0.9px;-webkit-text-stroke:0.15px #000;">1496</div>
<div class="t " style="left:4.90px;top:212.54px;font-size:11.5px;line-height:15px;font-family:'Liberation Mono',monospace;letter-spacing:-0.9px;-webkit-text-stroke:0.15px #000;">laughs</div>
<div class="t " style="left:76.90px;top:212.54px;font-size:11.5px;line-height:15px;font-family:'Liberation Mono',monospace;letter-spacing:-0.9px;-webkit-text-stroke:0.15px #000;">9</div>
<div class="t " style="left:124.90px;top:212.54px;font-size:11.5px;line-height:15px;font-family:'Liberation Mono',monospace;letter-spacing:-0.9px;-webkit-text-stroke:0.15px #000;">8.18</div>
<div class="t " style="left:172.90px;top:212.54px;font-size:11.5px;line-height:15px;font-family:'Liberation Mono',monospace;letter-spacing:-0.9px;-webkit-text-stroke:0.15px #000;">1.1551</div>
<div class="t " style="left:227.90px;top:212.54px;font-size:11.5px;line-height:15px;font-family:'Liberation Mono',monospace;letter-spacing:-0.9px;-webkit-text-stroke:0.15px #000;">3554</div>
<div class="t " style="left:4.90px;top:226.99px;font-size:11.5px;line-height:15px;font-family:'Liberation Mono',monospace;letter-spacing:-0.9px;-webkit-text-stroke:0.15px #000;">joy</div>
<div class="t " style="left:76.90px;top:226.99px;font-size:11.5px;line-height:15px;font-family:'Liberation Mono',monospace;letter-spacing:-0.9px;-webkit-text-stroke:0.15px #000;">10</div>
<div class="t " style="left:124.90px;top:226.99px;font-size:11.5px;line-height:15px;font-family:'Liberation Mono',monospace;letter-spacing:-0.9px;-webkit-text-stroke:0.15px #000;">8.16</div>
<div class="t " style="left:172.90px;top:226.99px;font-size:11.5px;line-height:15px;font-family:'Liberation Mono',monospace;letter-spacing:-0.9px;-webkit-text-stroke:0.15px #000;">1.0568</div>
<div class="t " style="left:227.90px;top:226.99px;font-size:11.5px;line-height:15px;font-family:'Liberation Mono',monospace;letter-spacing:-0.9px;-webkit-text-stroke:0.15px #000;">988</div>
<div class="t " style="left:4.90px;top:241.44px;font-size:11.5px;line-height:15px;font-family:'Liberation Mono',monospace;letter-spacing:-0.9px;-webkit-text-stroke:0.15px #000;">successful</div>
<div class="t " style="left:76.90px;top:241.44px;font-size:11.5px;line-height:15px;font-family:'Liberation Mono',monospace;letter-spacing:-0.9px;-webkit-text-stroke:0.15px #000;">11</div>
<div class="t " style="left:124.90px;top:241.44px;font-size:11.5px;line-height:15px;font-family:'Liberation Mono',monospace;letter-spacing:-0.9px;-webkit-text-stroke:0.15px #000;">8.16</div>
<div class="t " style="left:172.90px;top:241.44px;font-size:11.5px;line-height:15px;font-family:'Liberation Mono',monospace;letter-spacing:-0.9px;-webkit-text-stroke:0.15px #000;">1.0759</div>
<div class="t " style="left:227.90px;top:241.44px;font-size:11.5px;line-height:15px;font-family:'Liberation Mono',monospace;letter-spacing:-0.9px;-webkit-text-stroke:0.15px #000;">2176</div>
</div>
<div class="b" style="left:0;top:0;width:262.20000000000005px;height:430px;background:#fff;clip-path:polygon(0.00px 259.20px,12.25px 271.70px,24.50px 259.20px,36.75px 271.70px,49.00px 259.20px,61.25px 271.70px,73.50px 259.20px,85.75px 271.70px,98.00px 259.20px,110.25px 271.70px,122.50px 259.20px,134.75px 271.70px,147.00px 259.20px,159.25px 271.70px,171.50px 259.20px,183.75px 271.70px,196.00px 259.20px,208.25px 271.70px,220.50px 259.20px,232.75px 271.70px,245.00px 259.20px,257.25px 271.70px,262.20px 266.65px,262.20px 430.00px,0.00px 430.00px);">
<div class="t " style="left:2.00px;top:259.04px;font-size:11.5px;line-height:15px;font-family:'Liberation Mono',monospace;letter-spacing:-0.9px;-webkit-text-stroke:0.15px #000;">raped</div>
<div class="t " style="left:76.90px;top:259.04px;font-size:11.5px;line-height:15px;font-family:'Liberation Mono',monospace;letter-spacing:-0.9px;-webkit-text-stroke:0.15px #000;">10211</div>
<div class="t " style="left:124.90px;top:259.04px;font-size:11.5px;line-height:15px;font-family:'Liberation Mono',monospace;letter-spacing:-0.9px;-webkit-text-stroke:0.15px #000;">1.64</div>
<div class="t " style="left:172.90px;top:259.04px;font-size:11.5px;line-height:15px;font-family:'Liberation Mono',monospace;letter-spacing:-0.9px;-webkit-text-stroke:0.15px #000;">1.4252</div>
<div class="t " style="left:228.90px;top:259.04px;font-size:11.5px;line-height:15px;font-family:'Liberation Mono',monospace;letter-spacing:-0.9px;-webkit-text-stroke:0.15px #000;">--</div>
<div class="t " style="left:2.00px;top:273.01px;font-size:11.5px;line-height:15px;font-family:'Liberation Mono',monospace;letter-spacing:-0.9px;-webkit-text-stroke:0.15px #000;">torture</div>
<div class="t " style="left:76.90px;top:273.01px;font-size:11.5px;line-height:15px;font-family:'Liberation Mono',monospace;letter-spacing:-0.9px;-webkit-text-stroke:0.15px #000;">10212</div>
<div class="t " style="left:124.90px;top:273.01px;font-size:11.5px;line-height:15px;font-family:'Liberation Mono',monospace;letter-spacing:-0.9px;-webkit-text-stroke:0.15px #000;">1.58</div>
<div class="t " style="left:172.90px;top:273.01px;font-size:11.5px;line-height:15px;font-family:'Liberation Mono',monospace;letter-spacing:-0.9px;-webkit-text-stroke:0.15px #000;">1.0515</div>
<div class="t " style="left:228.90px;top:273.01px;font-size:11.5px;line-height:15px;font-family:'Liberation Mono',monospace;letter-spacing:-0.9px;-webkit-text-stroke:0.15px #000;">3175</div>
<div class="t " style="left:2.00px;top:286.98px;font-size:11.5px;line-height:15px;font-family:'Liberation Mono',monospace;letter-spacing:-0.9px;-webkit-text-stroke:0.15px #000;">died</div>
<div class="t " style="left:76.90px;top:286.98px;font-size:11.5px;line-height:15px;font-family:'Liberation Mono',monospace;letter-spacing:-0.9px;-webkit-text-stroke:0.15px #000;">10213</div>
<div class="t " style="left:124.90px;top:286.98px;font-size:11.5px;line-height:15px;font-family:'Liberation Mono',monospace;letter-spacing:-0.9px;-webkit-text-stroke:0.15px #000;">1.56</div>
<div class="t " style="left:172.90px;top:286.98px;font-size:11.5px;line-height:15px;font-family:'Liberation Mono',monospace;letter-spacing:-0.9px;-webkit-text-stroke:0.15px #000;">1.1980</div>
<div class="t " style="left:228.90px;top:286.98px;font-size:11.5px;line-height:15px;font-family:'Liberation Mono',monospace;letter-spacing:-0.9px;-webkit-text-stroke:0.15px #000;">1223</div>
<div class="t " style="left:2.00px;top:300.95px;font-size:11.5px;line-height:15px;font-family:'Liberation Mono',monospace;letter-spacing:-0.9px;-webkit-text-stroke:0.15px #000;">kill</div>
<div class="t " style="left:76.90px;top:300.95px;font-size:11.5px;line-height:15px;font-family:'Liberation Mono',monospace;letter-spacing:-0.9px;-webkit-text-stroke:0.15px #000;">10214</div>
<div class="t " style="left:124.90px;top:300.95px;font-size:11.5px;line-height:15px;font-family:'Liberation Mono',monospace;letter-spacing:-0.9px;-webkit-text-stroke:0.15px #000;">1.56</div>
<div class="t " style="left:172.90px;top:300.95px;font-size:11.5px;line-height:15px;font-family:'Liberation Mono',monospace;letter-spacing:-0.9px;-webkit-text-stroke:0.15px #000;">1.0529</div>
<div class="t " style="left:228.90px;top:300.95px;font-size:11.5px;line-height:15px;font-family:'Liberation Mono',monospace;letter-spacing:-0.9px;-webkit-text-stroke:0.15px #000;">798</div>
<div class="t " style="left:2.00px;top:314.92px;font-size:11.5px;line-height:15px;font-family:'Liberation Mono',monospace;letter-spacing:-0.9px;-webkit-text-stroke:0.15px #000;">killed</div>
<div class="t " style="left:76.90px;top:314.92px;font-size:11.5px;line-height:15px;font-family:'Liberation Mono',monospace;letter-spacing:-0.9px;-webkit-text-stroke:0.15px #000;">10215</div>
<div class="t " style="left:124.90px;top:314.92px;font-size:11.5px;line-height:15px;font-family:'Liberation Mono',monospace;letter-spacing:-0.9px;-webkit-text-stroke:0.15px #000;">1.56</div>
<div class="t " style="left:172.90px;top:314.92px;font-size:11.5px;line-height:15px;font-family:'Liberation Mono',monospace;letter-spacing:-0.9px;-webkit-text-stroke:0.15px #000;">1.2316</div>
<div class="t " style="left:228.90px;top:314.92px;font-size:11.5px;line-height:15px;font-family:'Liberation Mono',monospace;letter-spacing:-0.9px;-webkit-text-stroke:0.15px #000;">1137</div>
<div class="t " style="left:2.00px;top:328.89px;font-size:11.5px;line-height:15px;font-family:'Liberation Mono',monospace;letter-spacing:-0.9px;-webkit-text-stroke:0.15px #000;">cancer</div>
<div class="t " style="left:76.90px;top:328.89px;font-size:11.5px;line-height:15px;font-family:'Liberation Mono',monospace;letter-spacing:-0.9px;-webkit-text-stroke:0.15px #000;">10216</div>
<div class="t " style="left:124.90px;top:328.89px;font-size:11.5px;line-height:15px;font-family:'Liberation Mono',monospace;letter-spacing:-0.9px;-webkit-text-stroke:0.15px #000;">1.54</div>
<div class="t " style="left:172.90px;top:328.89px;font-size:11.5px;line-height:15px;font-family:'Liberation Mono',monospace;letter-spacing:-0.9px;-webkit-text-stroke:0.15px #000;">1.0730</div>
<div class="t " style="left:228.90px;top:328.89px;font-size:11.5px;line-height:15px;font-family:'Liberation Mono',monospace;letter-spacing:-0.9px;-webkit-text-stroke:0.15px #000;">946</div>
<div class="t " style="left:2.00px;top:342.86px;font-size:11.5px;line-height:15px;font-family:'Liberation Mono',monospace;letter-spacing:-0.9px;-webkit-text-stroke:0.15px #000;">death</div>
<div class="t " style="left:76.90px;top:342.86px;font-size:11.5px;line-height:15px;font-family:'Liberation Mono',monospace;letter-spacing:-0.9px;-webkit-text-stroke:0.15px #000;">10217</div>
<div class="t " style="left:124.90px;top:342.86px;font-size:11.5px;line-height:15px;font-family:'Liberation Mono',monospace;letter-spacing:-0.9px;-webkit-text-stroke:0.15px #000;">1.54</div>
<div class="t " style="left:172.90px;top:342.86px;font-size:11.5px;line-height:15px;font-family:'Liberation Mono',monospace;letter-spacing:-0.9px;-webkit-text-stroke:0.15px #000;">1.2811</div>
<div class="t " style="left:228.90px;top:342.86px;font-size:11.5px;line-height:15px;font-family:'Liberation Mono',monospace;letter-spacing:-0.9px;-webkit-text-stroke:0.15px #000;">509</div>
<div class="t " style="left:2.00px;top:356.83px;font-size:11.5px;line-height:15px;font-family:'Liberation Mono',monospace;letter-spacing:-0.9px;-webkit-text-stroke:0.15px #000;">murder</div>
<div class="t " style="left:76.90px;top:356.83px;font-size:11.5px;line-height:15px;font-family:'Liberation Mono',monospace;letter-spacing:-0.9px;-webkit-text-stroke:0.15px #000;">10218</div>
<div class="t " style="left:124.90px;top:356.83px;font-size:11.5px;line-height:15px;font-family:'Liberation Mono',monospace;letter-spacing:-0.9px;-webkit-text-stroke:0.15px #000;">1.48</div>
<div class="t " style="left:172.90px;top:356.83px;font-size:11.5px;line-height:15px;font-family:'Liberation Mono',monospace;letter-spacing:-0.9px;-webkit-text-stroke:0.15px #000;">1.0150</div>
<div class="t " style="left:228.90px;top:356.83px;font-size:11.5px;line-height:15px;font-family:'Liberation Mono',monospace;letter-spacing:-0.9px;-webkit-text-stroke:0.15px #000;">2762</div>
<div class="t " style="left:2.00px;top:370.80px;font-size:11.5px;line-height:15px;font-family:'Liberation Mono',monospace;letter-spacing:-0.9px;-webkit-text-stroke:0.15px #000;">terrorism</div>
<div class="t " style="left:76.90px;top:370.80px;font-size:11.5px;line-height:15px;font-family:'Liberation Mono',monospace;letter-spacing:-0.9px;-webkit-text-stroke:0.15px #000;">10219</div>
<div class="t " style="left:124.90px;top:370.80px;font-size:11.5px;line-height:15px;font-family:'Liberation Mono',monospace;letter-spacing:-0.9px;-webkit-text-stroke:0.15px #000;">1.48</div>
<div class="t " style="left:172.90px;top:370.80px;font-size:11.5px;line-height:15px;font-family:'Liberation Mono',monospace;letter-spacing:-0.9px;-webkit-text-stroke:0.15px #000;">0.9089</div>
<div class="t " style="left:228.90px;top:370.80px;font-size:11.5px;line-height:15px;font-family:'Liberation Mono',monospace;letter-spacing:-0.9px;-webkit-text-stroke:0.15px #000;">--</div>
<div class="t " style="left:2.00px;top:384.77px;font-size:11.5px;line-height:15px;font-family:'Liberation Mono',monospace;letter-spacing:-0.9px;-webkit-text-stroke:0.15px #000;">rape</div>
<div class="t " style="left:76.90px;top:384.77px;font-size:11.5px;line-height:15px;font-family:'Liberation Mono',monospace;letter-spacing:-0.9px;-webkit-text-stroke:0.15px #000;">10220</div>
<div class="t " style="left:124.90px;top:384.77px;font-size:11.5px;line-height:15px;font-family:'Liberation Mono',monospace;letter-spacing:-0.9px;-webkit-text-stroke:0.15px #000;">1.44</div>
<div class="t " style="left:172.90px;top:384.77px;font-size:11.5px;line-height:15px;font-family:'Liberation Mono',monospace;letter-spacing:-0.9px;-webkit-text-stroke:0.15px #000;">0.7866</div>
<div class="t " style="left:228.90px;top:384.77px;font-size:11.5px;line-height:15px;font-family:'Liberation Mono',monospace;letter-spacing:-0.9px;-webkit-text-stroke:0.15px #000;">3133</div>
<div class="t " style="left:2.00px;top:398.74px;font-size:11.5px;line-height:15px;font-family:'Liberation Mono',monospace;letter-spacing:-0.9px;-webkit-text-stroke:0.15px #000;">suicide</div>
<div class="t " style="left:76.90px;top:398.74px;font-size:11.5px;line-height:15px;font-family:'Liberation Mono',monospace;letter-spacing:-0.9px;-webkit-text-stroke:0.15px #000;">10221</div>
<div class="t " style="left:124.90px;top:398.74px;font-size:11.5px;line-height:15px;font-family:'Liberation Mono',monospace;letter-spacing:-0.9px;-webkit-text-stroke:0.15px #000;">1.30</div>
<div class="t " style="left:172.90px;top:398.74px;font-size:11.5px;line-height:15px;font-family:'Liberation Mono',monospace;letter-spacing:-0.9px;-webkit-text-stroke:0.15px #000;">0.8391</div>
<div class="t " style="left:228.90px;top:398.74px;font-size:11.5px;line-height:15px;font-family:'Liberation Mono',monospace;letter-spacing:-0.9px;-webkit-text-stroke:0.15px #000;">2124</div>
<div class="t " style="left:2.00px;top:412.71px;font-size:11.5px;line-height:15px;font-family:'Liberation Mono',monospace;letter-spacing:-0.9px;-webkit-text-stroke:0.15px #000;">terrorist</div>
<div class="t " style="left:76.90px;top:412.71px;font-size:11.5px;line-height:15px;font-family:'Liberation Mono',monospace;letter-spacing:-0.9px;-webkit-text-stroke:0.15px #000;">10222</div>
<div class="t " style="left:124.90px;top:412.71px;font-size:11.5px;line-height:15px;font-family:'Liberation Mono',monospace;letter-spacing:-0.9px;-webkit-text-stroke:0.15px #000;">1.30</div>
<div class="t " style="left:172.90px;top:412.71px;font-size:11.5px;line-height:15px;font-family:'Liberation Mono',monospace;letter-spacing:-0.9px;-webkit-text-stroke:0.15px #000;">0.9091</div>
<div class="t " style="left:228.90px;top:412.71px;font-size:11.5px;line-height:15px;font-family:'Liberation Mono',monospace;letter-spacing:-0.9px;-webkit-text-stroke:0.15px #000;">3576</div>
</div>
</div>
<div class="t w" style="left:721.60px;top:721.46px;font-size:13.4px;line-height:17px;color:#fff;transform:scale(1.0,1.07);transform-origin:0 13.14px;">Dodds’ Amazon Mechanical Turk List</div>
</div>
</body>
</html>
